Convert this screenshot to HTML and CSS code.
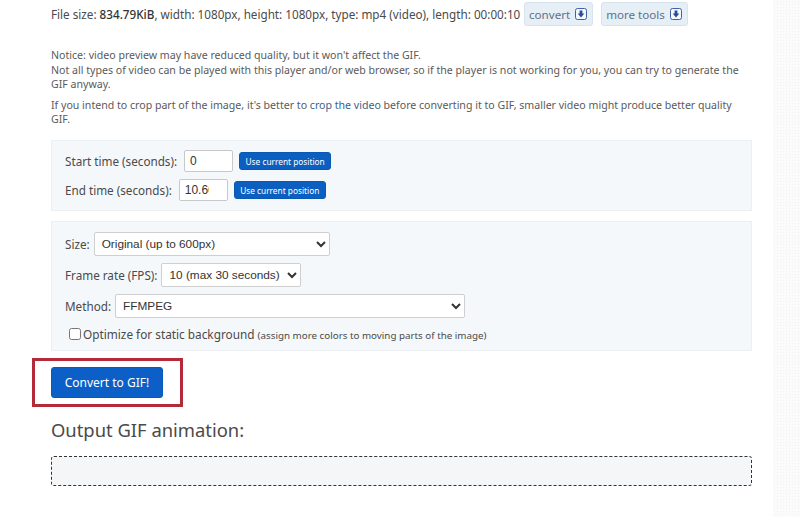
FILE: index.html
```html
<!DOCTYPE html>
<html lang="en">
<head>
<meta charset="utf-8">
<title>Video to GIF</title>
<link rel="stylesheet" href="styles.css">
</head>
<body>
<div class="page">
  <main class="main">
    <div class="info">
      <span class="info-text">File size: <strong>834.79KiB</strong>, width: 1080px, height: 1080px, type: mp4 (video), length: 00:00:10</span>
      <a class="tool" href="#">convert
        <svg class="tool-icon" viewBox="0 0 12 12" aria-hidden="true"><rect x="0.5" y="0.5" width="11" height="11" rx="2" fill="#f4f7fc" stroke="#3f5fa8"/><path d="M4.6 2.6h2.8v3h1.9L6 9.4 2.7 5.6h1.9z" fill="#2a4a9a"/></svg>
      </a>
      <a class="tool" href="#">more tools
        <svg class="tool-icon" viewBox="0 0 12 12" aria-hidden="true"><rect x="0.5" y="0.5" width="11" height="11" rx="2" fill="#f4f7fc" stroke="#3f5fa8"/><path d="M4.6 2.6h2.8v3h1.9L6 9.4 2.7 5.6h1.9z" fill="#2a4a9a"/></svg>
      </a>
    </div>
    <p class="note note-first">Notice: video preview may have reduced quality, but it won't affect the GIF.<br>Not all types of video can be played with this player and/or web browser, so if the player is not working for you, you can try to generate the GIF anyway.</p>
    <p class="note note-second">If you intend to crop part of the image, it's better to <a class="link" href="#">crop the video</a> before converting it to GIF, smaller video might produce better quality GIF.</p>

    <section class="panel panel-time">
      <div class="row">
        <label class="label" for="start">Start time (seconds):</label>
        <input class="input" id="start" type="text" value="0">
        <button class="btn-small" type="button">Use current position</button>
      </div>
      <div class="row">
        <label class="label" for="end">End time (seconds):</label>
        <input class="input" id="end" type="text" value="10.66">
        <button class="btn-small" type="button">Use current position</button>
      </div>
    </section>

    <section class="panel panel-options">
      <div class="row">
        <label class="label" for="size">Size:</label>
        <select class="select select-size" id="size"><option>Original (up to 600px)</option></select>
      </div>
      <div class="row">
        <label class="label" for="fps">Frame rate (FPS):</label>
        <select class="select select-fps" id="fps"><option>10 (max 30 seconds)</option></select>
      </div>
      <div class="row">
        <label class="label" for="method">Method:</label>
        <select class="select select-method" id="method"><option>FFMPEG</option></select>
      </div>
      <div class="check-row">
        <input class="check" id="opt" type="checkbox">
        <label class="check-label" for="opt">Optimize for static background <small class="hint">(assign more colors to moving parts of the image)</small></label>
      </div>
    </section>

    <div class="convert-wrap">
      <button class="btn-convert" type="button">Convert to GIF!</button>
      <span class="highlight"></span>
    </div>

    <h2 class="heading">Output GIF animation:</h2>
    <div class="output"></div>
  </main>
  <aside class="side"></aside>
</div>
</body>
</html>
```
FILE: styles.css
```css
* { box-sizing: border-box; }
html, body { margin: 0; padding: 0; background: #fff; }
body {
  font-family: "Noto Sans", "Open Sans", sans-serif;
  font-size: 12px;
  color: #4a4a4a;
  overflow: hidden;
}
.page { display: flex; width: 800px; height: 517px; }
.main { width: 773px; flex: none; padding: 2px 21px 0 51px; }
.side {
  flex: 1;
  background-color: #fbfbfb;
  background-image: radial-gradient(#f1f1f1 0.6px, transparent 0.8px);
  background-size: 3px 3px;
}
.info { display: flex; align-items: center; height: 24px; color: #4a4a4a; }
.info-text { width: 473px; flex: none; white-space: nowrap; font-size: 11.7px; }
.info-text strong { font-weight: 500; color: #333; }
.tool {
  display: flex; align-items: center; gap: 5px;
  height: 24px; padding: 0 5px 0 4px; margin-right: 8px;
  background: #e6eef6; border: 1px solid #d9e3ee; border-radius: 3px;
  color: #5f7186; text-decoration: none; font-size: 11.6px;
  white-space: nowrap;
}
.tool-icon { width: 12px; height: 12px; flex: none; }
.note { margin: 0; font-size: 10.6px; line-height: 14.6px; color: #5a5a5a; }
.note-first { margin-top: 22px; }
.note-second { margin-top: 6px; }
.link { color: #3c5f86; text-decoration: none; }
.panel {
  background: #f5f8fb; border: 1px solid #edf0f3;
  padding: 9px 10px 0 13px;
}
.panel-time { margin-top: 13px; height: 71px; }
.panel-options { margin-top: 10px; height: 130px; padding-top: 10px; }
.row { display: flex; align-items: center; gap: 4px; height: 23px; margin-bottom: 6px; }
.panel-options .row { gap: 4px; margin-bottom: 7px; height: 24px; }
.label { white-space: nowrap; font-size: 11.7px; color: #4a4a4a; }
.input {
  width: 49px; height: 22px; padding: 0 18px 0 5px;
  border: 1px solid #c8c8c8; border-radius: 2px; background: #fff;
  font: 12px "Liberation Sans", sans-serif; color: #333;
}
.row .input { margin-left: 3px; }
.btn-small {
  margin-left: 2px; height: 18px; width: 92px; padding: 0;
  background: #0b5fc0; border: 1px solid #0a58b4; border-radius: 3px;
  color: #fff; font: 8.3px "Noto Sans", sans-serif; white-space: nowrap;
}
.select {
  height: 24px; padding: 0 3px;
  border: 1px solid #cfcfcf; border-radius: 2px; background: #fff;
  font: 11.8px "Liberation Sans", sans-serif; color: #333;
}
.select-size { width: 236px; }
.select-fps { width: 140px; }
.select-method { width: 350px; }
.check-row { display: flex; align-items: center; height: 20px; margin-top: -1px; padding-left: 4px; }
.check { width: 12px; height: 12px; margin: 0 2px 0 0; flex: none; }
.check-label { white-space: nowrap; font-size: 11.8px; }
.hint { font-size: 9.8px; }
.convert-wrap { position: relative; width: 112px; height: 31px; margin-top: 16px; }
.btn-convert {
  display: block; width: 112px; height: 31px;
  background: #0b5fc6; border: 1px solid #0a5ab9; border-radius: 3px;
  color: #fff; font: 12px "Noto Sans", sans-serif;
}
.highlight {
  position: absolute; left: -19px; top: -9px; width: 151px; height: 49px;
  border: 3px solid #b52a38; pointer-events: none;
}
.heading { margin: 19px 0 0; font-size: 18.4px; font-weight: 400; line-height: 25px; color: #4a4a4a; }
.output {
  margin-top: 14px; height: 30px;
  background: #f5f6f8; border: 1px dashed #333; border-radius: 3px;
}
```
